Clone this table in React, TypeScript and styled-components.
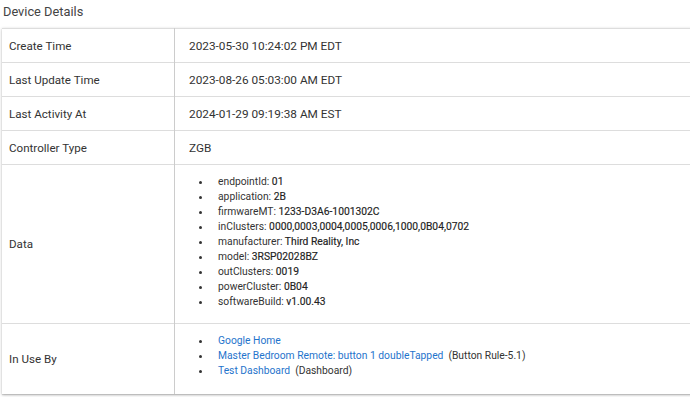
import React from "react";
import styled, { createGlobalStyle } from "styled-components";

const GlobalStyle = createGlobalStyle`
  body {
    margin: 0;
    background: #fff;
    font-family: Roboto, "Liberation Sans", sans-serif;
    color: #333;
    overflow: hidden;
  }
`;

const summary = [
  { label: "Create Time", value: "2023-05-30 10:24:02 PM EDT" },
  { label: "Last Update Time", value: "2023-08-26 05:03:00 AM EDT" },
  { label: "Last Activity At", value: "2024-01-29 09:19:38 AM EST" },
  { label: "Controller Type", value: "ZGB" },
];

const data = [
  ["endpointId", "01"],
  ["application", "2B"],
  ["firmwareMT", "1233-D3A6-1001302C"],
  ["inClusters", "0000,0003,0004,0005,0006,1000,0B04,0702"],
  ["manufacturer", "Third Reality, Inc"],
  ["model", "3RSP02028BZ"],
  ["outClusters", "0019"],
  ["powerCluster", "0B04"],
  ["softwareBuild", "v1.00.43"],
];

const usedBy = [
  { name: "Google Home", note: "" },
  { name: "Master Bedroom Remote: button 1 doubleTapped", note: "(Button Rule-5.1)" },
  { name: "Test Dashboard", note: "(Dashboard)" },
];

export const App = () => {
  return (
    <Page>
      <GlobalStyle />
      <Title>Device Details</Title>
      <Table>
        <tbody>
          {summary.map((row) => (
            <tr key={row.label}>
              <LabelCell>{row.label}</LabelCell>
              <ValueCell>{row.value}</ValueCell>
            </tr>
          ))}
          <tr>
            <LabelCell>Data</LabelCell>
            <ValueCell $list>
              <BulletList>
                {data.map(([key, val]) => (
                  <li key={key}>
                    {key}: <Val>{val}</Val>
                  </li>
                ))}
              </BulletList>
            </ValueCell>
          </tr>
          <tr>
            <LabelCell>In Use By</LabelCell>
            <ValueCell $list $bottom={16}>
              <BulletList>
                {usedBy.map((item) => (
                  <li key={item.name}>
                    <AppLink href="#">{item.name}</AppLink>
                    {item.note && <Note>{item.note}</Note>}
                  </li>
                ))}
              </BulletList>
            </ValueCell>
          </tr>
        </tbody>
      </Table>
    </Page>
  );
};

export default App;

const Page = styled.div`
  width: 690px;
  height: 397px;
`;

const Title = styled.div`
  height: 28px;
  padding-left: 3px;
  font-size: 12.8px;
  line-height: 24px;
  color: #444;
`;

const Table = styled.table`
  margin-left: 2px;
  width: 700px;
  border-collapse: collapse;
  box-shadow: 0 1px 3px rgba(0, 0, 0, 0.25), 0 1px 1px rgba(0, 0, 0, 0.12);

  tr {
    border-top: 1px solid #ddd;
  }
`;

const LabelCell = styled.td`
  width: 158px;
  padding: 0 7px;
  height: 33px;
  font-size: 11.6px;
  vertical-align: middle;
  border-right: 1px solid #ccc;
  color: #333;
`;

const ValueCell = styled.td<{ $list?: boolean; $bottom?: number }>`
  padding: ${(p) => (p.$list ? `9px 14px ${p.$bottom ?? 14}px` : "0 14px")};
  height: 33px;
  font-size: 11.8px;
  vertical-align: middle;
  color: #333;
`;

const BulletList = styled.ul`
  margin: 0;
  padding-left: 23px;
  font-size: 10.3px;
  line-height: 15px;

  li {
    padding-left: 6px;
  }
`;

const Val = styled.span`
  color: #222;
  -webkit-text-stroke: 0.15px #222;
`;

const AppLink = styled.a`
  color: #1f74cc;
  text-decoration: none;
`;

const Note = styled.span`
  margin-left: 5px;
`;
